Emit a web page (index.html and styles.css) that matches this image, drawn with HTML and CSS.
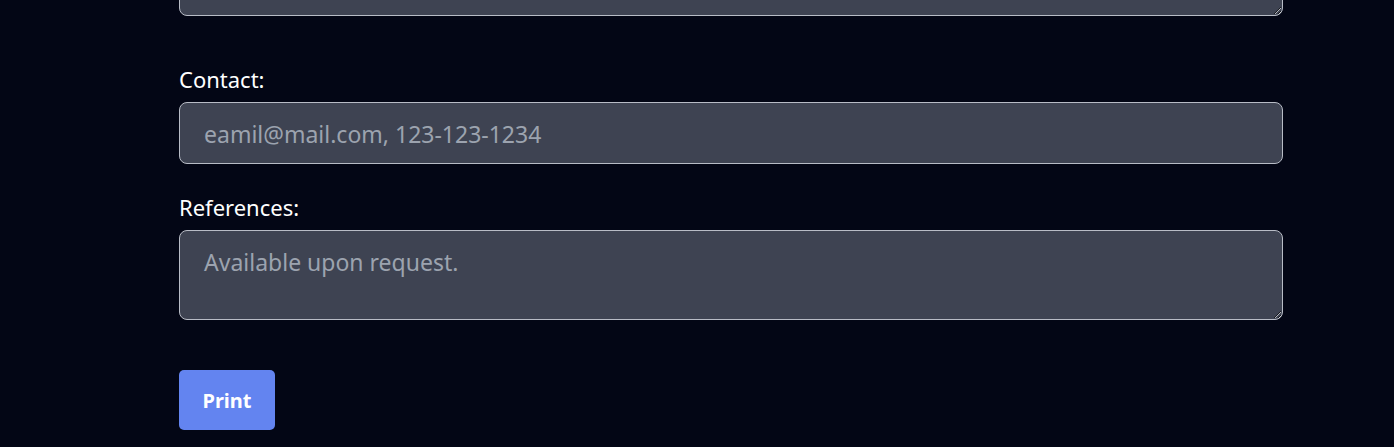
FILE: index.html
```html
<!DOCTYPE html>
<html>
<head>
<meta charset="utf-8">
<link rel="stylesheet" href="styles.css">
</head>
<body>
<main class="form">
  <textarea class="field area first" placeholder="Previously I participated in projects with many..."></textarea>
  <label class="label">Contact:</label>
  <input class="field input" placeholder="eamil@mail.com, 123-123-1234">
  <label class="label">References:</label>
  <textarea class="field area" placeholder="Available upon request."></textarea>
  <div class="actions"><button class="btn">Print</button></div>
</main>
</body>
</html>
```
FILE: styles.css
```css
html, body { margin: 0; background: #030615; height: 100%; overflow: hidden; }
.form {
  display: flex;
  flex-direction: column;
  width: 1104px;
  margin-left: 179px;
  font-family: "Noto Sans", sans-serif;
}
.label {
  color: #ffffff;
  font-size: 22px;
  line-height: 30px;
  margin-bottom: 8px;
}
.field {
  box-sizing: border-box;
  width: 100%;
  background: #3e4352;
  border: 1px solid #b8bcc6;
  border-radius: 8px;
  color: #fff;
  font-family: "Noto Sans", sans-serif;
  font-size: 23px;
  padding: 15px 24px 14px;
  outline: none;
}
.field::placeholder { color: #9ca3af; }
.input { height: 62px; margin-bottom: 28px; }
.area { height: 90px; resize: vertical; display: block; }
.first { margin-top: -74px; margin-bottom: 48px; }
.actions { margin-top: 50px; }
.btn {
  background: #6384f0;
  color: #fff;
  border: none;
  border-radius: 5px;
  width: 96px;
  height: 60px;
  font-family: "Noto Sans", sans-serif;
  font-weight: 700;
  font-size: 20px;
}
```
